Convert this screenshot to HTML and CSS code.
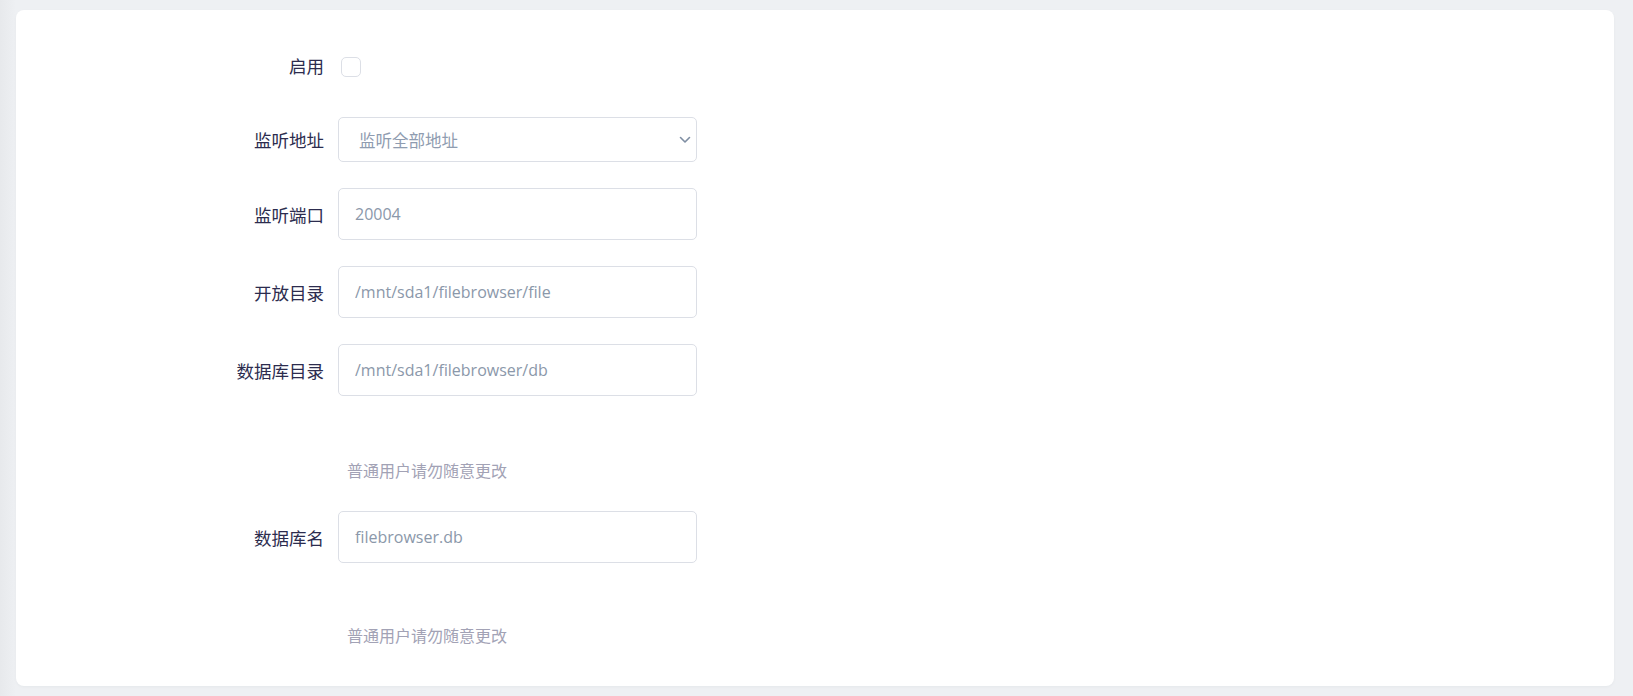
FILE: index.html
```html
<!DOCTYPE html>
<html lang="zh-CN">
<head>
    <meta charset="UTF-8">
    <meta name="viewport" content="width=device-width, initial-scale=1.0">
    <title>FileBrowser</title>
    <link rel="stylesheet" href="styles.css">
</head>
<body>
    <div class="page">
        <div class="card">
            <form class="form">
                <div class="form-row row-check">
                    <label class="form-label">启用</label>
                    <div class="form-control">
                        <input type="checkbox" class="checkbox">
                    </div>
                </div>

                <div class="form-row row-select">
                    <label class="form-label">监听地址</label>
                    <div class="form-control select-wrap">
                        <select class="select">
                            <option>监听全部地址</option>
                        </select>
                        <svg class="chevron" width="12" height="8" viewBox="0 0 12 8">
                            <path d="M1.5 1.5 L6 6 L10.5 1.5" fill="none" stroke="#7f8ea3" stroke-width="1.6" stroke-linecap="round" stroke-linejoin="round"/>
                        </svg>
                    </div>
                </div>

                <div class="form-row">
                    <label class="form-label">监听端口</label>
                    <div class="form-control">
                        <input type="text" class="input" placeholder="20004">
                    </div>
                </div>

                <div class="form-row">
                    <label class="form-label">开放目录</label>
                    <div class="form-control">
                        <input type="text" class="input" placeholder="/mnt/sda1/filebrowser/file">
                    </div>
                </div>

                <div class="form-group">
                    <div class="form-row">
                        <label class="form-label">数据库目录</label>
                        <div class="form-control">
                            <input type="text" class="input" placeholder="/mnt/sda1/filebrowser/db">
                        </div>
                    </div>
                    <div class="help">普通用户请勿随意更改</div>
                </div>

                <div class="form-group group-last">
                    <div class="form-row">
                        <label class="form-label">数据库名</label>
                        <div class="form-control">
                            <input type="text" class="input" placeholder="filebrowser.db">
                        </div>
                    </div>
                    <div class="help">普通用户请勿随意更改</div>
                </div>
            </form>
        </div>
    </div>
</body>
</html>
```

FILE: styles.css
```css
html, body {
    margin: 0;
    height: 100%;
}

body {
    font-family: "Open Sans", "Noto Sans CJK SC", sans-serif;
    background: linear-gradient(to right, #e7e9ec 0, #eef0f3 16px);
}

.page {
    box-sizing: border-box;
    height: 100vh;
    padding: 10px 19px 10px 16px;
    display: flex;
}

.card {
    flex: 1;
    background-color: #fff;
    border-radius: 8px;
    box-shadow: 0 1px 3px rgba(30, 40, 60, 0.04);
    padding: 47px 0 0 0;
}

.form {
    display: flex;
    flex-direction: column;
    gap: 26px;
}

.form-row {
    display: grid;
    grid-template-columns: 308px 359px;
    column-gap: 14px;
    align-items: center;
}

.form-label {
    text-align: right;
    font-family: "Noto Sans CJK SC", sans-serif;
    font-size: 17.5px;
    color: #2c2c4e;
}

.row-check .form-label {
    line-height: 20px;
    margin-top: -3px;
}

.row-select {
    margin-top: 14px;
}

.checkbox {
    appearance: none;
    -webkit-appearance: none;
    display: block;
    width: 20px;
    height: 20px;
    margin: 0 0 0 3px;
    border: 1px solid #dcdfe6;
    border-radius: 5px;
    background-color: #fff;
    box-sizing: border-box;
}

.input,
.select {
    display: block;
    width: 100%;
    box-sizing: border-box;
    border: 1px solid #dcdfe6;
    border-radius: 5px;
    background-color: #fff;
    outline: none;
    font-family: "Open Sans", "Noto Sans CJK SC", sans-serif;
    font-size: 16px;
    color: #8b98aa;
}

.input {
    height: 52px;
    padding: 0 16px;
}

.input::placeholder {
    color: #8b98aa;
}

.select-wrap {
    position: relative;
}

.select {
    appearance: none;
    -webkit-appearance: none;
    height: 45px;
    padding: 0 36px 0 20px;
    font-family: "Noto Sans CJK SC", sans-serif;
    font-size: 16.5px;
    color: #8f9cb0;
}

.chevron {
    position: absolute;
    right: 6px;
    top: 19px;
    pointer-events: none;
}

.help {
    margin: 64px 0 0 331px;
    font-family: "Noto Sans CJK SC", sans-serif;
    font-size: 16px;
    line-height: 20px;
    color: #a2a2b5;
}

.group-last {
    margin-top: 5px;
}

.group-last .help {
    margin-top: 62px;
}
```
